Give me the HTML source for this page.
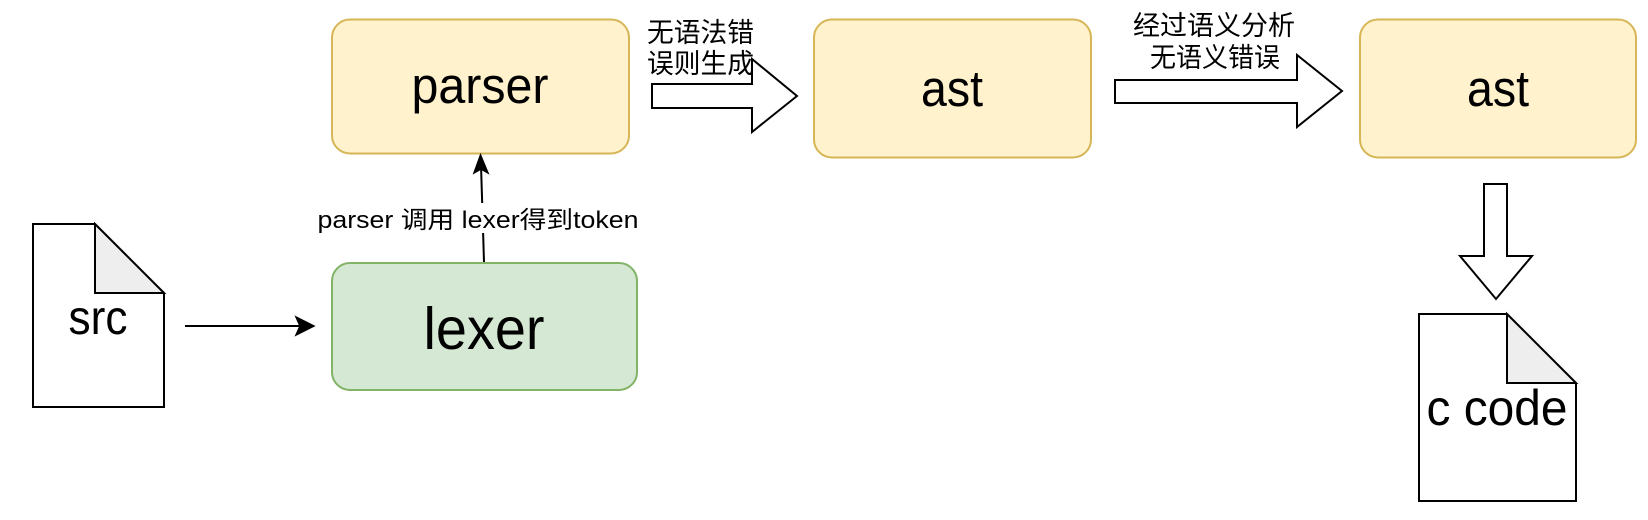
<!DOCTYPE html>
<html><head><meta charset="utf-8"><style>
html,body{margin:0;padding:0;background:#fff;}
svg{display:block;}
text{font-family:"Liberation Sans","Noto Sans CJK SC",sans-serif;fill:#000;}
</style></head><body>
<svg width="1648" height="520" viewBox="0 0 1648 520" xmlns="http://www.w3.org/2000/svg">
<rect x="332" y="19.5" width="297" height="134" rx="18" fill="#fff2cc" stroke="#d6b656" stroke-width="2"/>
<rect x="814" y="19.5" width="277" height="138" rx="18" fill="#fff2cc" stroke="#d6b656" stroke-width="2"/>
<rect x="1360" y="19.5" width="276" height="138" rx="18" fill="#fff2cc" stroke="#d6b656" stroke-width="2"/>
<rect x="332" y="263" width="305" height="127" rx="18" fill="#d5e8d4" stroke="#82b366" stroke-width="2"/>
<text x="480" y="103" font-size="51" text-anchor="middle" textLength="137" lengthAdjust="spacingAndGlyphs">parser</text>
<text x="952" y="106" font-size="51" text-anchor="middle" textLength="62" lengthAdjust="spacingAndGlyphs">ast</text>
<text x="1498" y="106" font-size="51" text-anchor="middle" textLength="62" lengthAdjust="spacingAndGlyphs">ast</text>
<text x="484" y="349" font-size="59" text-anchor="middle" textLength="121" lengthAdjust="spacingAndGlyphs">lexer</text>
<path d="M33 224 H95 L164 293 V407 H33 Z" fill="#fff" stroke="#000" stroke-width="2"/>
<path d="M95 224 V293 H164 Z" fill="#eeeeee" stroke="#000" stroke-width="2"/>
<text x="98" y="334" font-size="48" text-anchor="middle" textLength="59" lengthAdjust="spacingAndGlyphs">src</text>
<path d="M1419 314 H1507 L1576 383 V501 H1419 Z" fill="#fff" stroke="#000" stroke-width="2"/>
<path d="M1507 314 V383 H1576 Z" fill="#eeeeee" stroke="#000" stroke-width="2"/>
<text x="1497" y="425" font-size="50" text-anchor="middle" textLength="141" lengthAdjust="spacingAndGlyphs">c code</text>
<line x1="185" y1="326" x2="306" y2="326" stroke="#000" stroke-width="2"/>
<path d="M314 326 L296 317 L300 326 L296 335 Z" fill="#000" stroke="#000" stroke-width="1.5"/>
<line x1="484" y1="262" x2="481" y2="165" stroke="#000" stroke-width="2"/>
<path d="M480.5 155 L474 173 L481 169 L488 173 Z" fill="#000" stroke="#000" stroke-width="1.5"/>
<rect x="316" y="203" width="326" height="30" fill="#fff"/>
<text x="478" y="228" font-size="24" text-anchor="middle" textLength="321" lengthAdjust="spacingAndGlyphs">parser 调用 lexer得到token</text>
<path d="M652 84 H752 V59 L797 96 L752 132 V108 H652 Z" fill="#fff" stroke="#000" stroke-width="2"/>
<text x="647" y="42" font-size="27" textLength="107" lengthAdjust="spacingAndGlyphs">无语法错</text>
<text x="647" y="73" font-size="27" textLength="107" lengthAdjust="spacingAndGlyphs">误则生成</text>
<path d="M1115 80 H1297 V55 L1342 91 L1297 127 V103 H1115 Z" fill="#fff" stroke="#000" stroke-width="2"/>
<text x="1133" y="35" font-size="27" textLength="162" lengthAdjust="spacingAndGlyphs">经过语义分析</text>
<text x="1150" y="67" font-size="27" textLength="130" lengthAdjust="spacingAndGlyphs">无语义错误</text>
<path d="M1484 184 H1507 V256 H1532 L1496 299 L1460 256 H1484 Z" fill="#fff" stroke="#000" stroke-width="2"/>
</svg>
</body></html>
